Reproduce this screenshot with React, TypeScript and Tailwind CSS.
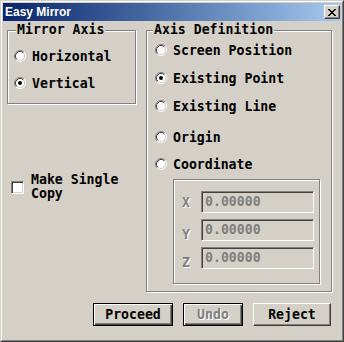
import React from "react";

const FACE = "#d4d0c8";

function Radio({ checked = false }: { checked?: boolean }) {
  return (
    <svg width="12" height="12" viewBox="0 0 12 12" className="shrink-0">
      <circle cx="6" cy="6" r="4.5" fill="#fff" />
      <path d="M2.11 9.89 A5.5 5.5 0 0 1 9.89 2.11" fill="none" stroke="#808080" />
      <path d="M9.89 2.11 A5.5 5.5 0 0 1 2.11 9.89" fill="none" stroke="#fff" />
      <path d="M2.82 9.18 A4.5 4.5 0 0 1 9.18 2.82" fill="none" stroke="#404040" />
      <path d="M9.18 2.82 A4.5 4.5 0 0 1 2.82 9.18" fill="none" stroke={FACE} />
      {checked && <circle cx="6" cy="6" r="2" fill="#000" />}
    </svg>
  );
}

function RadioRow({ label, checked, className = "" }: { label: string; checked?: boolean; className?: string }) {
  return (
    <div className={`flex h-[16px] items-center ${className}`}>
      <Radio checked={checked} />
      <span className="ml-[6px] leading-[15px]">{label}</span>
    </div>
  );
}

function CloseGlyph() {
  // marlett style X, 8x7
  const rows = ["##....##", ".##..##.", "..####..", "...##...", "..####..", ".##..##.", "##....##"];
  return (
    <svg width="8" height="7" viewBox="0 0 8 7" shapeRendering="crispEdges">
      {rows.map((r, y) =>
        r.split("").map((c, x) => (c === "#" ? <rect key={`${x}-${y}`} x={x} y={y} width="1" height="1" fill="#000" /> : null))
      )}
    </svg>
  );
}

function CoordRow({ axis, labelTop }: { axis: string; labelTop: string }) {
  return (
    <div className="flex h-[22px] items-start">
      <span className={`w-[27px] pl-[8px] leading-[15px] text-[#808080] [text-shadow:1px_1px_0_#fff] ${labelTop}`}>{axis}</span>
      <div className="flex h-[22px] w-[113px] items-center border border-t-[#808080] border-l-[#808080] border-r-white border-b-white pl-[3px] text-[#808080] shadow-[inset_1px_1px_0_#404040,inset_-1px_-1px_0_#d4d0c8]">
        0.00000
      </div>
    </div>
  );
}

export default function App() {
  return (
    <div className="h-[342px] w-[344px] border border-t-[#d4d0c8] border-l-[#d4d0c8] border-r-[#404040] border-b-[#404040] font-['DejaVu_Sans_Mono',monospace] text-[13.2px] font-bold text-black">
      <div className="flex h-full flex-col border border-t-white border-l-white border-r-[#808080] border-b-[#808080] bg-[#d4d0c8] p-[1px]">
        {/* title bar */}
        <div className="flex h-[18px] items-center justify-between bg-linear-to-r from-[#0a246a] to-[#a6caf0] pl-[2px] pr-[1px]">
          <span className="font-['Liberation_Sans',Arial,sans-serif] text-[12px] font-bold text-white">Easy Mirror</span>
          <button className="flex h-[14px] w-[16px] items-center justify-center border border-t-white border-l-white border-r-[#404040] border-b-[#404040] bg-[#d4d0c8] shadow-[inset_-1px_-1px_0_#808080]">
            <CloseGlyph />
          </button>
        </div>

        <div className="flex items-start pl-[4px] pt-[9px]">
          {/* left column */}
          <div className="flex w-[129px] flex-col">
            <div className="relative h-[74px] border border-[#808080] pl-[6px] pt-[17px] shadow-[inset_1px_1px_0_#fff,1px_1px_0_#fff]">
              <span className="absolute left-[8px] top-[-9px] bg-[#d4d0c8] px-[1px] leading-[15px]">Mirror Axis</span>
              <RadioRow label="Horizontal" />
              <RadioRow label="Vertical" checked className="mt-[11px]" />
            </div>

            <div className="mt-[69px] flex items-center pl-[4px]">
              <div className="h-[13px] w-[13px] shrink-0 border border-t-[#808080] border-l-[#808080] border-r-white border-b-white bg-white shadow-[inset_1px_1px_0_#404040,inset_-1px_-1px_0_#d4d0c8]" />
              <span className="ml-[7px] leading-[14px]">
                Make Single
                <br />
                Copy
              </span>
            </div>
          </div>

          {/* right group */}
          <div className="relative ml-[10px] h-[262px] w-[186px] border border-[#808080] pl-[8px] pt-[11px] shadow-[inset_1px_1px_0_#fff,1px_1px_0_#fff]">
            <span className="absolute left-[6px] top-[-9px] bg-[#d4d0c8] px-[1px] leading-[15px]">Axis Definition</span>
            <RadioRow label="Screen Position" />
            <RadioRow label="Existing Point" checked className="mt-[12px]" />
            <RadioRow label="Existing Line" className="mt-[12px]" />
            <RadioRow label="Origin" className="mt-[15px]" />
            <RadioRow label="Coordinate" className="mt-[11px]" />

            <div className="ml-[18px] mt-[7px] flex h-[105px] w-[147px] flex-col gap-[6px] border border-[#808080] pt-[11px] shadow-[inset_1px_1px_0_#fff,1px_1px_0_#fff]">
              <CoordRow axis="X" labelTop="mt-[4px]" />
              <CoordRow axis="Y" labelTop="mt-[8px]" />
              <CoordRow axis="Z" labelTop="mt-[8px]" />
            </div>
          </div>
        </div>

        {/* buttons */}
        <div className="mt-[11px] flex gap-[10px] pl-[90px]">
          <button className="h-[23px] w-[80px] border border-black shadow-[inset_1px_1px_0_#fff,inset_-1px_-1px_0_#404040,inset_-2px_-2px_0_#808080]">
            Proceed
          </button>
          <button className="h-[23px] w-[60px] border border-black text-[#808080] shadow-[inset_1px_1px_0_#fff,inset_-1px_-1px_0_#404040,inset_-2px_-2px_0_#808080] [text-shadow:1px_1px_0_#fff]">
            Undo
          </button>
          <button className="h-[23px] w-[78px] border border-t-white border-l-white border-r-[#404040] border-b-[#404040] shadow-[inset_-1px_-1px_0_#808080]">
            Reject
          </button>
        </div>
      </div>
    </div>
  );
}
